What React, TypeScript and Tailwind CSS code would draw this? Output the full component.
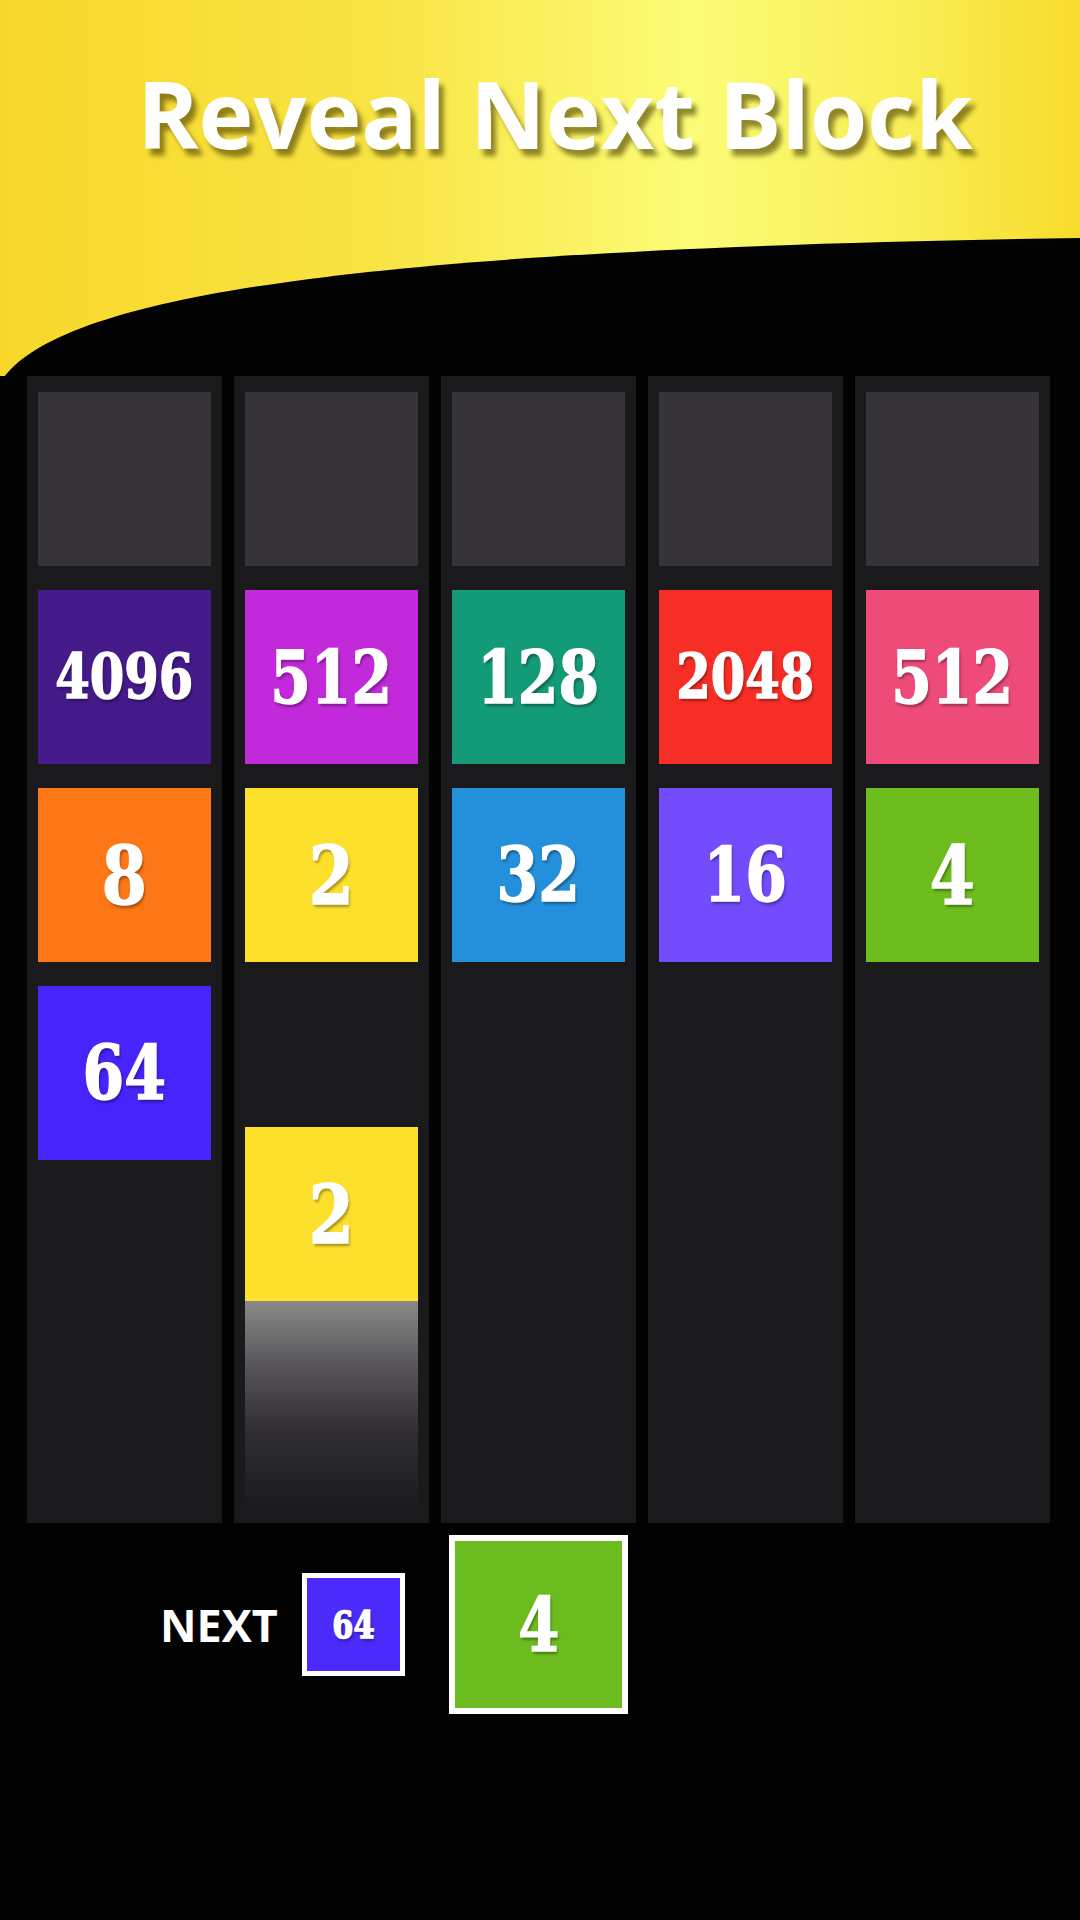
import type { ReactNode } from 'react'

type Tile = { value: number; color: string }

// Board columns, top to bottom (the hidden slot is drawn separately)
const COLUMNS: Tile[][] = [
  [
    { value: 4096, color: 'bg-[#451a8b]' },
    { value: 8, color: 'bg-[#fd7716]' },
    { value: 64, color: 'bg-[#4624fb]' },
  ],
  [
    { value: 512, color: 'bg-[#c229da]' },
    { value: 2, color: 'bg-[#fce02c]' },
  ],
  [
    { value: 128, color: 'bg-[#139b77]' },
    { value: 32, color: 'bg-[#2490dc]' },
  ],
  [
    { value: 2048, color: 'bg-[#f72e26]' },
    { value: 16, color: 'bg-[#724cfd]' },
  ],
  [
    { value: 512, color: 'bg-[#ef4b79]' },
    { value: 4, color: 'bg-[#6dbd1e]' },
  ],
]

function sizeFor(value: number) {
  const digits = String(value).length
  if (digits >= 4) return 'text-[62px]'
  if (digits === 3) return 'text-[73px]'
  if (digits === 2) return 'text-[75px]'
  return 'text-[81px]'
}

function Digits({ value, className }: { value: number; className: string }) {
  return (
    <span
      className={`inline-block scale-x-[0.8] font-bold leading-none text-white [-webkit-text-stroke:1.5px_#ffffff] [text-shadow:2px_3px_3px_rgba(0,0,0,0.35)] ${className}`}
      style={{ fontFamily: '"DejaVu Serif", "Liberation Serif", serif' }}
    >
      {value}
    </span>
  )
}

function Block({ tile, children }: { tile: Tile; children?: ReactNode }) {
  return (
    <div className={`w-[173px] h-[174px] shrink-0 flex items-center justify-center ${tile.color}`}>
      <Digits value={tile.value} className={sizeFor(tile.value)} />
      {children}
    </div>
  )
}

export default function App() {
  return (
    <div className="w-[1080px] h-[1920px] bg-[#020203] overflow-hidden flex flex-col">
      {/* ── Banner ── */}
      <header className="relative h-[376px] shrink-0 bg-[linear-gradient(90deg,#f7d82a_0%,#f9e444_35%,#fbfc76_64%,#f9ee56_84%,#f8dc2c_100%)]">
        <h1
          className="relative z-10 pt-[67px] pl-[30px] text-center text-[93px] font-bold leading-none text-white [text-shadow:5px_7px_5px_rgba(70,60,0,0.6)]"
          style={{ fontFamily: '"Open Sans", "Noto Sans", sans-serif' }}
        >
          Reveal Next Block
        </h1>
        <svg
          className="absolute inset-0"
          width="1080"
          height="376"
          viewBox="0 0 1080 376"
          aria-hidden="true"
        >
          <path d="M4 377 C 70 290, 400 248, 1080 238 L 1080 377 Z" fill="#020203" />
        </svg>
      </header>

      {/* ── Board ── */}
      <div className="flex gap-[12px] pl-[27px] h-[1147px] shrink-0">
        {COLUMNS.map((col, i) => (
          <div key={i} className="w-[195px] h-full bg-[#1a191c] flex flex-col gap-[24px] pt-[16px] px-[11px]">
            <div className="w-[173px] h-[174px] shrink-0 bg-[#363437]" />
            {col.map((tile, j) => (
              <Block key={j} tile={tile} />
            ))}
            {i === 1 && (
              <div className="flex-1 flex flex-col mt-[141px] pb-[10px]">
                <Block tile={{ value: 2, color: 'bg-[#fce02c]' }} />
                <div className="flex-1 bg-[linear-gradient(180deg,#8a8a88_0%,#58565a_30%,#2f2d31_62%,#1a191c_100%)]" />
              </div>
            )}
          </div>
        ))}
      </div>

      {/* ── Next queue ── */}
      <div className="flex items-center mt-[12px] h-[179px]">
        <span
          className="ml-[160px] text-[45px] font-bold leading-none text-white"
          style={{ fontFamily: '"Open Sans", "Noto Sans", sans-serif' }}
        >
          NEXT
        </span>
        <div className="ml-[24px] w-[103px] h-[103px] border-[5px] border-white bg-[#4a2bfb] flex items-center justify-center">
          <Digits value={64} className="text-[38px]" />
        </div>
        <div className="ml-[44px] w-[179px] h-[179px] border-[6px] border-white bg-[#6cbc1f] flex items-center justify-center">
          <Digits value={4} className="text-[74px]" />
        </div>
      </div>
    </div>
  )
}
